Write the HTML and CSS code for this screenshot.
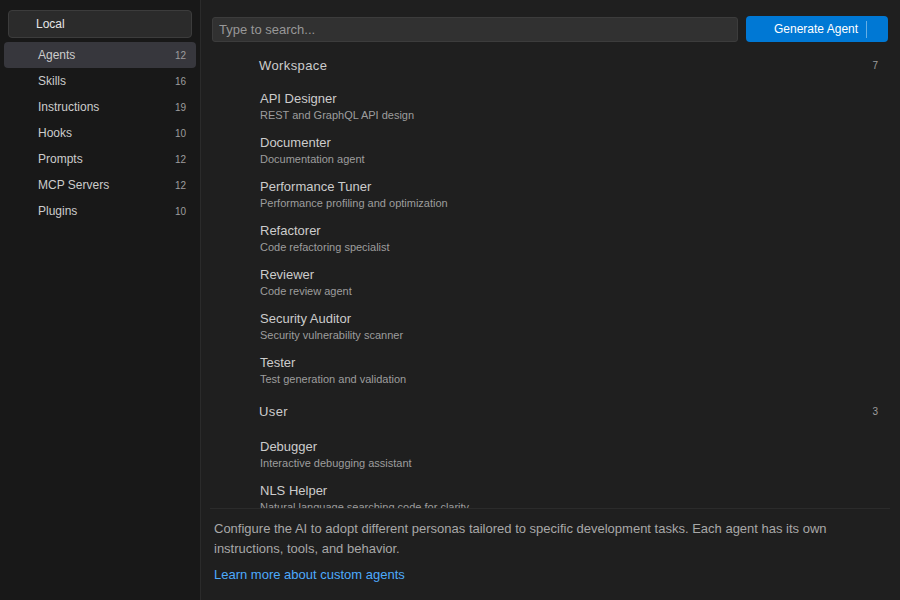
FILE: index.html
```html
<!DOCTYPE html>
<html>
<head>
<meta charset="utf-8">
<link rel="stylesheet" href="styles.css">
</head>
<body>
<div class="app">
  <aside class="sidebar">
    <div class="scope">Local</div>
    <nav class="nav">
      <div class="nav-item active"><span>Agents</span><span class="count">12</span></div>
      <div class="nav-item"><span>Skills</span><span class="count">16</span></div>
      <div class="nav-item"><span>Instructions</span><span class="count">19</span></div>
      <div class="nav-item"><span>Hooks</span><span class="count">10</span></div>
      <div class="nav-item"><span>Prompts</span><span class="count">12</span></div>
      <div class="nav-item"><span>MCP Servers</span><span class="count">12</span></div>
      <div class="nav-item"><span>Plugins</span><span class="count">10</span></div>
    </nav>
  </aside>
  <main class="main">
    <div class="toolbar">
      <input class="search" type="text" placeholder="Type to search...">
      <button class="gen-btn"><span class="gen-label">Generate Agent</span><span class="gen-sep"></span></button>
    </div>
    <div class="list">
      <div class="group-header"><span>Workspace</span><span class="group-count">7</span></div>
      <div class="item"><div class="item-name">API Designer</div><div class="item-desc">REST and GraphQL API design</div></div>
      <div class="item"><div class="item-name">Documenter</div><div class="item-desc">Documentation agent</div></div>
      <div class="item"><div class="item-name">Performance Tuner</div><div class="item-desc">Performance profiling and optimization</div></div>
      <div class="item"><div class="item-name">Refactorer</div><div class="item-desc">Code refactoring specialist</div></div>
      <div class="item"><div class="item-name">Reviewer</div><div class="item-desc">Code review agent</div></div>
      <div class="item"><div class="item-name">Security Auditor</div><div class="item-desc">Security vulnerability scanner</div></div>
      <div class="item"><div class="item-name">Tester</div><div class="item-desc">Test generation and validation</div></div>
      <div class="group-header group-later"><span>User</span><span class="group-count">3</span></div>
      <div class="item"><div class="item-name">Debugger</div><div class="item-desc">Interactive debugging assistant</div></div>
      <div class="item"><div class="item-name">NLS Helper</div><div class="item-desc">Natural language searching code for clarity</div></div>
    </div>
    <div class="footer">
      <p class="footer-text">Configure the AI to adopt different personas tailored to specific development tasks. Each agent has its own instructions, tools, and behavior.</p>
      <a class="footer-link" href="#">Learn more about custom agents</a>
    </div>
  </main>
</div>
</body>
</html>
```
FILE: styles.css
```css
html, body {
  margin: 0;
  padding: 0;
  width: 900px;
  height: 600px;
  overflow: hidden;
  background: #1f1f1f;
  font-family: "Liberation Sans", Arial, sans-serif;
}

.app {
  display: flex;
  width: 900px;
  height: 600px;
}

.sidebar {
  width: 200px;
  flex: none;
  background: #181818;
  border-right: 1px solid #2b2b2b;
  box-sizing: content-box;
  padding-top: 10px;
}

.scope {
  margin: 0 8px;
  height: 28px;
  box-sizing: border-box;
  border: 1px solid #3c3c3c;
  border-radius: 4px;
  background: #2b2b2b;
  color: #e6e6e6;
  font-size: 12px;
  line-height: 26px;
  padding-left: 27px;
}

.nav {
  margin-top: 4px;
  display: flex;
  flex-direction: column;
  padding: 0 4px;
}

.nav-item {
  height: 26px;
  display: flex;
  align-items: center;
  justify-content: space-between;
  padding: 0 10px 0 34px;
  border-radius: 4px;
  color: #cccccc;
  font-size: 12px;
}

.nav-item.active {
  background: #37373d;
}

.count {
  font-size: 10px;
  color: #9d9d9d;
}

.main {
  flex: 1;
  display: flex;
  flex-direction: column;
  min-width: 0;
  padding: 0 10px 0 9px;
}

.toolbar {
  display: flex;
  gap: 8px;
  padding: 16px 2px 0 2px;
  height: 26px;
  flex: none;
  box-sizing: content-box;
}

.search {
  flex: 1;
  height: 25px;
  margin-top: 1px;
  box-sizing: border-box;
  background: #313131;
  border: 1px solid #3c3c3c;
  border-radius: 3px;
  color: #cccccc;
  font-family: "Liberation Sans", Arial, sans-serif;
  font-size: 13px;
  padding: 0 6px;
  outline: none;
}

.search::placeholder {
  color: #989898;
}

.gen-btn {
  width: 142px;
  height: 26px;
  border: none;
  border-radius: 4px;
  background: #0078d4;
  color: #ffffff;
  font-family: "Liberation Sans", Arial, sans-serif;
  font-size: 12px;
  display: flex;
  align-items: center;
  padding: 0 0 0 28px;
  gap: 8px;
}

.gen-sep {
  width: 1px;
  height: 17px;
  background: rgba(255, 255, 255, 0.4);
}

.list {
  flex: 1;
  overflow: hidden;
  margin-top: 3px;
}

.group-header {
  height: 40px;
  display: flex;
  align-items: center;
  justify-content: space-between;
  padding: 1px 12px 0 49px;
  box-sizing: border-box;
  color: #cccccc;
  font-size: 13px;
  letter-spacing: 0.4px;
}

.group-later {
  padding-top: 0;
  padding-bottom: 3px;
}

.group-count {
  font-size: 10px;
  color: #9d9d9d;
  letter-spacing: 0;
}

.item {
  height: 44px;
  box-sizing: border-box;
  padding: 6px 0 0 50px;
}

.item-name {
  font-size: 13px;
  line-height: 16px;
  color: #cccccc;
}

.item-desc {
  font-size: 11px;
  line-height: 16px;
  color: #9d9d9d;
}

.footer {
  flex: none;
  border-top: 1px solid #2b2b2b;
  padding: 10px 4px 15px 4px;
}

.footer-text {
  margin: 0;
  font-size: 13px;
  line-height: 20px;
  color: #a8a8a8;
}

.footer-link {
  display: block;
  margin-top: 6px;
  font-size: 13px;
  line-height: 20px;
  color: #4daafc;
  text-decoration: none;
}
```
